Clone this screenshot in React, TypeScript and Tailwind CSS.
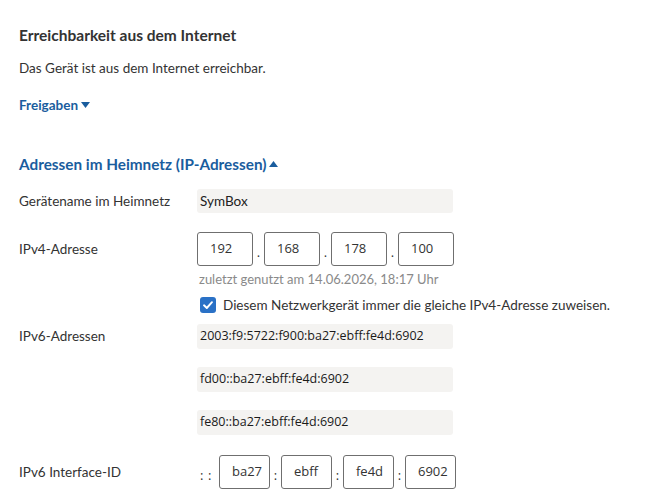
import React from 'react';

const sans = { fontFamily: 'Lato, "Noto Sans", sans-serif' };
const field = { fontFamily: '"Open Sans", "Noto Sans", sans-serif' };

function Caret({ up = false }: { up?: boolean }) {
  return (
    <svg width="9" height="6" viewBox="0 0 9 6" className="ml-[3px] inline-block">
      {up ? <path d="M0 6 L4.5 0 L9 6 Z" fill="currentColor" /> : <path d="M0 0 L9 0 L4.5 6 Z" fill="currentColor" />}
    </svg>
  );
}

function Row({
  label,
  children,
  className = '',
  labelClass = 'leading-[20px]',
}: {
  label: string;
  children: React.ReactNode;
  className?: string;
  labelClass?: string;
}) {
  return (
    <div className={`flex ${className}`}>
      <div className={`w-[178px] shrink-0 text-[13.5px] text-[#333] ${labelClass}`}>{label}</div>
      <div className="flex flex-col">{children}</div>
    </div>
  );
}

function ReadOnly({ value, className = '' }: { value: string; className?: string }) {
  return (
    <div
      className={`flex h-[25px] w-[256px] items-center rounded-[3px] bg-[#f4f3f1] px-[3px] text-[12.5px] text-[#1a1a1a] ${className}`}
      style={field}
    >
      {value}
    </div>
  );
}

function Octet({ value, w }: { value: string; w: string }) {
  return (
    <div
      className={`flex h-[34px] ${w} items-center rounded-[3px] border border-[#6f6f6f] bg-white pl-[12px] text-[13px] text-[#333]`}
      style={field}
    >
      {value}
    </div>
  );
}

function Sep({ ch }: { ch: string }) {
  return (
    <span className="w-[11px] self-end pb-[7px] text-center text-[13px] leading-none text-[#333]" style={field}>
      {ch}
    </span>
  );
}

export default function App() {
  return (
    <div className="h-[499px] w-[653px] overflow-hidden bg-white pl-[19px] pt-[25px]" style={sans}>
      <h2 className="text-[15.5px] font-bold leading-[20px] text-[#333]">Erreichbarkeit aus dem Internet</h2>
      <p className="mt-[13px] text-[13.5px] leading-[20px] text-[#333]">Das Gerät ist aus dem Internet erreichbar.</p>
      <div className="mt-[17px] flex items-center text-[13.5px] font-bold leading-[20px] text-[#1a5d9e]">
        Freigaben
        <Caret />
      </div>

      <div className="mt-[39px] flex items-center text-[15.3px] font-bold leading-[20px] text-[#1a5d9e]">
        Adressen im Heimnetz (IP-Adressen)
        <Caret up />
      </div>

      <Row label="Gerätename im Heimnetz" className="mt-[15px] items-center">
        <div className="flex h-[24px] w-[256px] items-center rounded-[3px] bg-[#f4f3f1] px-[3px] text-[13.5px] text-[#222]">
          SymBox
        </div>
      </Row>

      <Row label="IPv4-Adresse" className="mt-[19px] items-start" labelClass="leading-[34px]">
        <div className="flex h-[34px] items-center">
          <Octet value="192" w="w-[56px]" />
          <Sep ch="." />
          <Octet value="168" w="w-[56px]" />
          <Sep ch="." />
          <Octet value="178" w="w-[56px]" />
          <Sep ch="." />
          <Octet value="100" w="w-[56px]" />
        </div>
        <span className="mt-[4px] pl-[2px] text-[13px] leading-[18px] text-[#8a8a8a]">
          zuletzt genutzt am 14.06.2026, 18:17 Uhr
        </span>
        <label className="mt-[7px] flex items-center gap-[7px] pl-[3px] text-[13.5px] leading-[20px] text-[#333]">
          <span className="flex h-[16px] w-[16px] items-center justify-center rounded-[3px] bg-[#2a71c6]">
            <svg width="12" height="12" viewBox="0 0 12 12">
              <path d="M2 6.3 L4.8 9 L10 3.2" fill="none" stroke="white" strokeWidth="1.9" strokeLinecap="round" strokeLinejoin="round" />
            </svg>
          </span>
          Diesem Netzwerkgerät immer die gleiche IPv4-Adresse zuweisen.
        </label>
      </Row>

      <Row label="IPv6-Adressen" className="mt-[9px]" labelClass="leading-[25px]">
        <ReadOnly value="2003:f9:5722:f900:ba27:ebff:fe4d:6902" />
        <ReadOnly value="fd00::ba27:ebff:fe4d:6902" className="mt-[18px]" />
        <ReadOnly value="fe80::ba27:ebff:fe4d:6902" className="mt-[18px]" />
      </Row>

      <Row label="IPv6 Interface-ID" className="mt-[20px] items-center">
        <div className="flex h-[34px] items-center">
          <span className="flex w-[22px] self-end pb-[7px] pl-[3px] text-[13px] leading-none text-[#333]" style={field}>
            <span className="w-[8px]">:</span>
            <span>:</span>
          </span>
          <Octet value="ba27" w="w-[51px]" />
          <Sep ch=":" />
          <Octet value="ebff" w="w-[51px]" />
          <Sep ch=":" />
          <Octet value="fe4d" w="w-[51px]" />
          <Sep ch=":" />
          <Octet value="6902" w="w-[51px]" />
        </div>
      </Row>
    </div>
  );
}
